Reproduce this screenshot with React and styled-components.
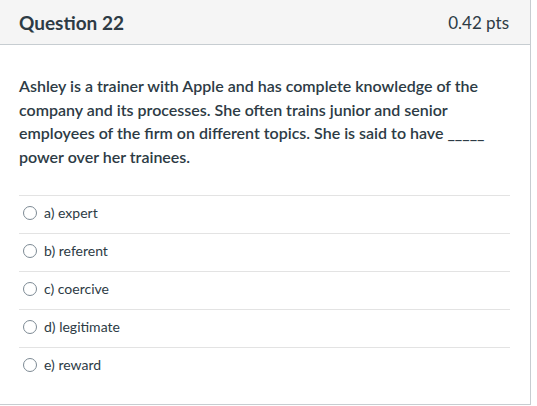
import styled, { createGlobalStyle } from 'styled-components'

const GlobalStyle = createGlobalStyle`
    body {
        margin: 0;
        background: #ffffff;
        font-family: Lato, "Open Sans", sans-serif;
        color: #2d3b45;
    }
`;

const answers = ['a) expert', 'b) referent', 'c) coercive', 'd) legitimate', 'e) reward'];

export default function App(){
    return(
        <>
            <GlobalStyle />
            <Card>
                <Header>
                    <Title>Question 22</Title>
                    <Points>0.42 pts</Points>
                </Header>
                <Body>
                    <QuestionText>
                        Ashley is a trainer with Apple and has complete knowledge of the
                        company and its processes. She often trains junior and senior
                        employees of the firm on different topics. She is said to have _____
                        power over her trainees.
                    </QuestionText>
                    <Answers>
                        {answers.map((a) => (
                            <Answer key={a}>
                                <Radio type="radio" name="q22" />
                                <AnswerLabel>{a}</AnswerLabel>
                            </Answer>
                        ))}
                    </Answers>
                </Body>
            </Card>
        </>
    )
}

const Card = styled.div`
    width: 530px;
    height: 404px;
    border-right: 1px solid #c7cdd1;
    border-bottom: 1px solid #c7cdd1;
    display: flex;
    flex-direction: column;
`;

const Header = styled.div`
    height: 45px;
    box-sizing: border-box;
    background: #f5f5f5;
    border-bottom: 1px solid #c7cdd1;
    display: flex;
    align-items: center;
    justify-content: space-between;
    padding: 0 21px 0 19px;
`;

const Title = styled.div`
    font-size: 19px;
    font-weight: 700;
    color: #2d3b45;
`;

const Points = styled.div`
    font-size: 17px;
    color: #2d3b45;
`;

const Body = styled.div`
    padding: 29px 20px 0 19px;
`;

const QuestionText = styled.div`
    font-size: 16px;
    font-weight: 600;
    line-height: 23.7px;
    padding-right: 10px;
`;

const Answers = styled.div`
    margin-top: 26px;
`;

const Answer = styled.label`
    display: flex;
    align-items: center;
    height: 37px;
    box-sizing: content-box;
    border-top: 1px solid #e3e3e3;
    padding: 0 0 0 4px;
    font-size: 14px;
`;

const Radio = styled.input`
    appearance: none;
    width: 14px;
    height: 14px;
    margin: 0 7px 2px 0;
    border: 1px solid #7d8a94;
    border-radius: 50%;
    background: #fff;
`;

const AnswerLabel = styled.span`
    color: #2d3b45;
    margin-bottom: 3px;
`;
